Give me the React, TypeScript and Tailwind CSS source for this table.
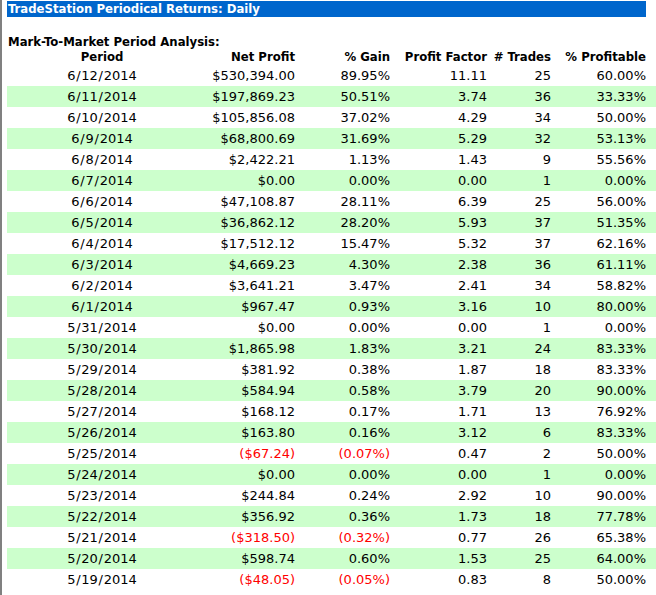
const rows: [string, string, string, string, number, string][] = [
  ["6/12/2014", "$530,394.00", "89.95%", "11.11", 25, "60.00%"],
  ["6/11/2014", "$197,869.23", "50.51%", "3.74", 36, "33.33%"],
  ["6/10/2014", "$105,856.08", "37.02%", "4.29", 34, "50.00%"],
  ["6/9/2014", "$68,800.69", "31.69%", "5.29", 32, "53.13%"],
  ["6/8/2014", "$2,422.21", "1.13%", "1.43", 9, "55.56%"],
  ["6/7/2014", "$0.00", "0.00%", "0.00", 1, "0.00%"],
  ["6/6/2014", "$47,108.87", "28.11%", "6.39", 25, "56.00%"],
  ["6/5/2014", "$36,862.12", "28.20%", "5.93", 37, "51.35%"],
  ["6/4/2014", "$17,512.12", "15.47%", "5.32", 37, "62.16%"],
  ["6/3/2014", "$4,669.23", "4.30%", "2.38", 36, "61.11%"],
  ["6/2/2014", "$3,641.21", "3.47%", "2.41", 34, "58.82%"],
  ["6/1/2014", "$967.47", "0.93%", "3.16", 10, "80.00%"],
  ["5/31/2014", "$0.00", "0.00%", "0.00", 1, "0.00%"],
  ["5/30/2014", "$1,865.98", "1.83%", "3.21", 24, "83.33%"],
  ["5/29/2014", "$381.92", "0.38%", "1.87", 18, "83.33%"],
  ["5/28/2014", "$584.94", "0.58%", "3.79", 20, "90.00%"],
  ["5/27/2014", "$168.12", "0.17%", "1.71", 13, "76.92%"],
  ["5/26/2014", "$163.80", "0.16%", "3.12", 6, "83.33%"],
  ["5/25/2014", "($67.24)", "(0.07%)", "0.47", 2, "50.00%"],
  ["5/24/2014", "$0.00", "0.00%", "0.00", 1, "0.00%"],
  ["5/23/2014", "$244.84", "0.24%", "2.92", 10, "90.00%"],
  ["5/22/2014", "$356.92", "0.36%", "1.73", 18, "77.78%"],
  ["5/21/2014", "($318.50)", "(0.32%)", "0.77", 26, "65.38%"],
  ["5/20/2014", "$598.74", "0.60%", "1.53", 25, "64.00%"],
  ["5/19/2014", "($48.05)", "(0.05%)", "0.83", 8, "50.00%"],
];

const grid = "grid grid-cols-[190px_98px_95px_97px_64px_95px]";
const head = "font-['DejaVu_Sans_Condensed','Liberation_Sans',sans-serif] font-bold text-[13px]";

// Verdana's slash is wider than DejaVu's; pad it a little.
function DateText({ d }: { d: string }) {
  const parts = d.split("/");
  return (
    <>
      {parts.map((p, i) => (
        <span key={i}>
          {i > 0 && <span className="px-[0.75px]">/</span>}
          {p}
        </span>
      ))}
    </>
  );
}

export default function App() {
  return (
    <div className="h-[595px] w-[656px] overflow-hidden bg-white border-l-2 border-[#808080] pl-[5px] pt-[1px] text-black">
      <div className="h-[16px] w-[639px] bg-[#0066cc] pl-[1px] text-[13px] leading-[16px] font-bold text-white font-['DejaVu_Sans_Condensed','Liberation_Sans',sans-serif]">
        TradeStation Periodical Returns: Daily
      </div>
      <div className={`mt-[17px] h-[15px] leading-[15px] pl-[1px] ${head}`}>
        Mark-To-Market Period Analysis:
      </div>
      <div className={`${grid} h-[16px] leading-[16px] ${head}`}>
        <div className="text-center">Period</div>
        <div className="text-right">Net Profit</div>
        <div className="text-right">% Gain</div>
        <div className="text-right">Profit Factor</div>
        <div className="text-right"># Trades</div>
        <div className="text-right">% Profitable</div>
      </div>
      <div className="font-['DejaVu_Sans',Verdana,sans-serif] text-[13px]">
        {rows.map((r, i) => {
          const neg = r[1].startsWith("(");
          return (
            <div
              key={r[0]}
              className={`${grid} h-[21px] items-center leading-[21px] ${i % 2 === 1 ? "bg-[#ccffcc]" : ""}`}
            >
              <div className="text-center"><DateText d={r[0]} /></div>
              <div className={`text-right ${neg ? "text-[#ff0000]" : ""}`}>{r[1]}</div>
              <div className={`text-right ${neg ? "text-[#ff0000]" : ""}`}>{r[2]}</div>
              <div className="text-right">{r[3]}</div>
              <div className="text-right">{r[4]}</div>
              <div className="text-right">{r[5]}</div>
            </div>
          );
        })}
      </div>
    </div>
  );
}
